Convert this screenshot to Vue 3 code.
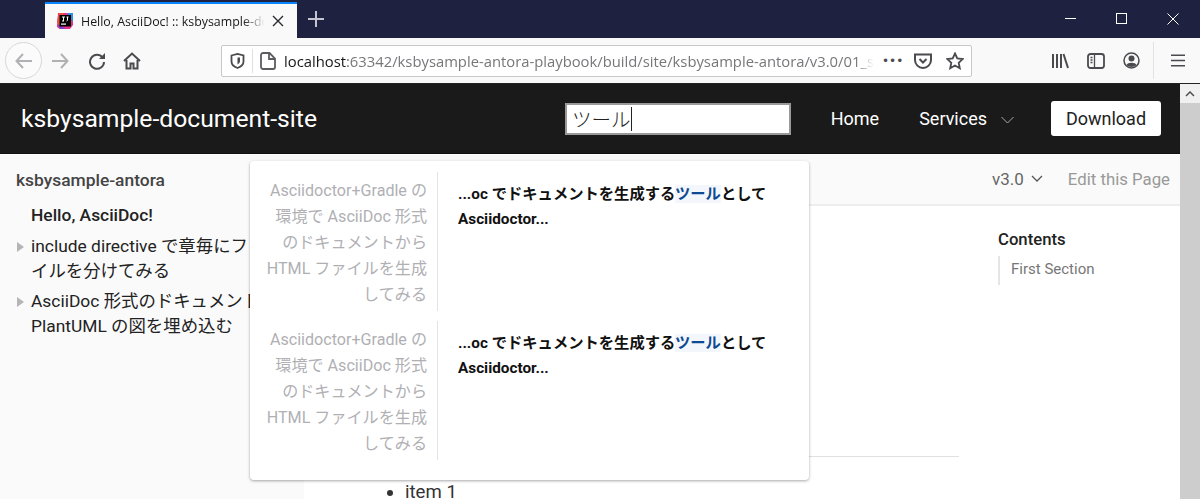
<script setup>
const results = [1, 2]
</script>

<template>
  <div class="page">
    <div class="titlebar">
      <div class="tab">
        <svg class="favicon" width="18" height="18" viewBox="0 0 18 18">
          <path d="M2 1h9l6 2v10l-3 4H4l-3-2z" fill="#e8308a" />
          <path d="M1 9l2-8h5L3 17z" fill="#f0503c" />
          <path d="M11 1h6v9z" fill="#2f8fe0" />
          <path d="M1 12l3 5h6z" fill="#7a3fd0" />
          <rect x="3.5" y="3" width="11.5" height="11.5" fill="#000" />
          <rect x="5" y="11.5" width="5" height="1.2" fill="#fff" />
          <path d="M6 5h3M7.5 5v4M6 9h2M10.5 5h2M11.5 5v3.4l-1 .6" stroke="#fff" stroke-width="1" fill="none" />
        </svg>
        <span class="tab-title">Hello, AsciiDoc! :: ksbysample-document-site</span>
        <svg class="tab-close" width="12" height="12" viewBox="0 0 12 12"><path d="M1 1l10 10M11 1L1 11" stroke="#2a2a2e" stroke-width="1.4" /></svg>
      </div>
      <svg class="newtab" width="16" height="16" viewBox="0 0 16 16"><path d="M8 0v16M0 8h16" stroke="#c4c5d0" stroke-width="2" /></svg>
      <div class="winbtns">
        <svg width="12" height="12" viewBox="0 0 12 12"><path d="M0 5.500h11" stroke="#fff" stroke-width="1" /></svg>
        <svg width="12" height="12" viewBox="0 0 12 12"><rect x=".5" y=".5" width="10" height="10" fill="none" stroke="#fff" stroke-width="1" /></svg>
        <svg width="12" height="12" viewBox="0 0 12 12"><path d="M.5.5l11 11M11.5.5l-11 11" stroke="#fff" stroke-width="1" /></svg>
      </div>
    </div>

    <div class="browserbar">
      <div class="back">
        <svg width="18" height="16" viewBox="0 0 18 16"><path d="M8 1L1.500 8 8 15M2 8h15" fill="none" stroke="#b1b1b3" stroke-width="2" /></svg>
      </div>
      <svg class="forward" width="18" height="16" viewBox="0 0 18 16"><path d="M10 1l6.500 7L10 15M16 8H1" fill="none" stroke="#b1b1b3" stroke-width="2" /></svg>
      <svg class="reload" width="18" height="18" viewBox="0 0 18 18"><path d="M14.500 5.500A7 7 0 1 0 16 10" fill="none" stroke="#4a4a4f" stroke-width="2" /><path d="M17 1v6h-6z" fill="#4a4a4f" /></svg>
      <svg class="home" width="18" height="18" viewBox="0 0 18 18"><path d="M1 9l8-7.500L17 9M3.500 8v8.500h4v-5h3v5h4V8" fill="none" stroke="#4a4a4f" stroke-width="2" /></svg>
      <div class="urlbar">
        <svg class="shield" width="15" height="16" viewBox="0 0 15 16"><path d="M1.500 2.500L7.500 1l6 1.500v6c0 3-3 5.500-6 6.500-3-1-6-3.500-6-6.500z" fill="none" stroke="#4a4a4f" stroke-width="1.800" /><path d="M7.500 4.500h2.500v3.500c0 1.500-1 2.500-2.500 3.500z" fill="#4a4a4f" /></svg>
        <span class="urlsep"></span>
        <svg class="pageicon" width="16" height="18" viewBox="0 0 16 18"><path d="M3 1h6.500L15 6.500V15a2 2 0 0 1-2 2H3a2 2 0 0 1-2-2V3a2 2 0 0 1 2-2zM9 1v6h6" fill="none" stroke="#5b5b60" stroke-width="1.800" /></svg>
        <span class="url"><span class="host">localhost</span>:63342/ksbysample-antora-playbook/build/site/ksbysample-antora/v3.0/01_section</span>
        <span class="dots">•••</span>
        <svg class="pocket" width="18" height="16" viewBox="0 0 18 16"><path d="M1 1.500h16V7a8 8 0 0 1-16 0z" fill="none" stroke="#4a4a4f" stroke-width="2" /><path d="M5.500 6L9 9.500 12.500 6" fill="none" stroke="#4a4a4f" stroke-width="2" /></svg>
        <svg class="star" width="18" height="18" viewBox="0 0 18 18"><path d="M9 1.500l2.300 5 5.400.6-4 3.700 1.100 5.400L9 13.500l-4.800 2.700 1.100-5.400-4-3.700 5.400-.6z" fill="none" stroke="#4a4a4f" stroke-width="1.800" /></svg>
      </div>
      <svg class="library" width="18" height="16" viewBox="0 0 18 16"><path d="M2 1v14M6 1v14M10 1v14M12.500 1l4.500 14" stroke="#4a4a4f" stroke-width="2" fill="none" /></svg>
      <svg class="sidebar-ic" width="18" height="16" viewBox="0 0 18 16"><rect x="1" y="1" width="16" height="14" rx="2.500" fill="none" stroke="#4a4a4f" stroke-width="1.800" /><path d="M7.500 1v14M3.500 4.500h2M3.500 7h2M3.500 9.500h2" stroke="#4a4a4f" stroke-width="1.300" /></svg>
      <svg class="account" width="17" height="17" viewBox="0 0 17 17"><circle cx="8.500" cy="8.500" r="7.500" fill="none" stroke="#4a4a4f" stroke-width="1.500" /><circle cx="8.500" cy="6.500" r="3" fill="#4a4a4f" /><path d="M3.500 13c1-3 9-3 10 0-2 2.500-8 2.500-10 0z" fill="#4a4a4f" /></svg>
      <span class="toolsep"></span>
      <svg class="menu" width="14" height="13" viewBox="0 0 14 13"><path d="M0 1.250h14M0 6.500h14M0 11.750h14" stroke="#4a4a4f" stroke-width="1.700" /></svg>
    </div>

    <div class="viewport">
      <div class="site">
        <header class="navbar">
          <span class="brand">ksbysample-document-site</span>
          <div class="search"><span class="query">ツール</span><i class="caret"></i></div>
          <nav class="links">
            <span class="link">Home</span>
            <span class="link services">Services
              <svg width="13" height="8" viewBox="0 0 13 8"><path d="M.5 1l6 6 6-6" fill="none" stroke="#aaa" stroke-width="1" /></svg>
            </span>
            <span class="download">Download</span>
          </nav>
        </header>
        <div class="body">
          <aside class="side">
            <div class="comp">ksbysample-antora</div>
            <div class="navitem current">Hello, AsciiDoc!</div>
            <div class="navitem arrow">include directive で章毎にファ<br />イルを分けてみる</div>
            <div class="navitem arrow">AsciiDoc 形式のドキュメントに<br />PlantUML の図を埋め込む</div>
          </aside>
          <main class="main">
            <div class="crumbs">
              <span class="version">v3.0
                <svg width="12" height="7" viewBox="0 0 12 7"><path d="M1 1l5 5 5-5" fill="none" stroke="#555" stroke-width="1.300" /></svg>
              </span>
              <span class="edit">Edit this Page</span>
            </div>
            <div class="columns">
              <article class="article">
                <hr class="rule" />
                <ul class="items"><li>item 1</li></ul>
              </article>
              <div class="toc">
                <div class="toc-title">Contents</div>
                <div class="toc-item">First Section</div>
              </div>
            </div>
          </main>
        </div>
      </div>
      <div class="scrollbar">
        <div class="scroll-up">
          <svg width="10" height="6" viewBox="0 0 10 6"><path d="M1 5l4-4 4 4" fill="none" stroke="#505050" stroke-width="1.500" /></svg>
        </div>
        <div class="thumb"></div>
      </div>

      <div class="popover">
        <div v-for="r in results" :key="r" class="result">
          <div class="hit-title">Asciidoctor+Gradle の環境で AsciiDoc 形式のドキュメントから HTML ファイルを生成してみる</div>
          <div class="hit-text">...oc でドキュメントを生成する<mark>ツール</mark>として Asciidoctor...</div>
        </div>
      </div>
    </div>
  </div>
</template>

<style>
html, body { margin: 0; overflow: hidden; background: #fff; }
</style>

<style scoped>
.page {
  width: 1200px;
  height: 499px;
  overflow: hidden;
  display: flex;
  flex-direction: column;
  font-family: Roboto, "Noto Sans CJK JP", sans-serif;
}
.titlebar {
  height: 38px;
  flex: none;
  background: #1f2141;
  display: flex;
  align-items: flex-end;
  padding-left: 45px;
}
.tab {
  width: 252px;
  height: 36px;
  box-sizing: border-box;
  border-top: 2px solid #0a84ff;
  background: #f9f9fa;
  display: flex;
  align-items: center;
  padding: 0 13px 0 11px;
  gap: 7px;
}
.favicon { flex: none; }
.tab-title {
  flex: 1;
  overflow: hidden;
  white-space: nowrap;
  font: 12.400px "Open Sans", sans-serif;
  color: #18181a;
  -webkit-mask-image: linear-gradient(90deg, #000 88%, transparent);
  mask-image: linear-gradient(90deg, #000 88%, transparent);
}
.tab-close { flex: none; }
.newtab { margin: 0 0 11px 11px; }
.winbtns {
  margin-left: auto;
  display: flex;
  gap: 39px;
  padding-right: 21px;
  margin-bottom: 13px;
}
.browserbar {
  height: 46px;
  flex: none;
  box-sizing: border-box;
  background: #f9f9fa;
  border-bottom: 1px solid #222;
  display: flex;
  align-items: center;
  padding: 0 0 0 5px;
}
.back {
  width: 35px;
  height: 35px;
  border: 1px solid #d8d8da;
  border-radius: 50%;
  display: flex;
  align-items: center;
  justify-content: center;
  background: #fbfbfb;
  flex: none;
}
.forward { margin-left: 9px; }
.reload { margin-left: 19px; }
.home { margin-left: 17px; }
.urlbar {
  width: 751px;
  height: 32px;
  margin-left: 80px;
  box-sizing: border-box;
  background: #fff;
  border: 1px solid #c8c8c9;
  border-radius: 2px;
  display: flex;
  align-items: center;
  padding-left: 8px;
  flex: none;
}
.shield { flex: none; }
.urlsep { width: 1px; height: 24px; background: #e0e0e2; margin: 0 7px; flex: none; }
.pageicon { flex: none; margin-right: 8px; }
.url {
  flex: 1;
  min-width: 0;
  overflow: hidden;
  white-space: nowrap;
  font: 14.800px "Open Sans", sans-serif;
  color: #77777a;
  -webkit-mask-image: linear-gradient(90deg, #000 97%, transparent);
  mask-image: linear-gradient(90deg, #000 97%, transparent);
}
.host { color: #18181a; }
.dots { flex: none; margin-left: 8px; color: #4a4a4f; font: 12px "DejaVu Sans", sans-serif; width: 19px; white-space: nowrap; }
.pocket { flex: none; margin-left: 13px; }
.star { flex: none; margin: 0 7px 0 14px; }
.library { margin-left: 79px; }
.sidebar-ic { margin-left: 18px; }
.account { margin-left: 18px; }
.toolsep { width: 1px; height: 37px; background: #e2e2e4; margin-left: 13px; }
.menu { margin-left: 17px; }
.viewport {
  position: relative;
  flex: 1;
  min-height: 0;
  display: flex;
  overflow: hidden;
}
.site { flex: 1; min-width: 0; display: flex; flex-direction: column; }
.navbar {
  height: 70px;
  flex: none;
  box-sizing: border-box;
  background: #1a1a1a;
  color: #fff;
  display: flex;
  align-items: center;
  padding: 0 19px 0 21px;
  border-bottom: 1px solid #111;
}
.brand { font-size: 24.700px; width: 544px; flex: none; white-space: nowrap; }
.search {
  width: 226px;
  height: 32px;
  flex: none;
  box-sizing: border-box;
  background: #fff;
  border: 2px solid #999;
  display: flex;
  align-items: center;
  padding-left: 5px;
  color: #222;
  font-size: 19.500px;
}
.query { font-family: "Noto Sans CJK JP", sans-serif; font-weight: 300; line-height: 1; }
.caret { width: 1px; height: 24px; background: #222; }
.links { margin-left: auto; display: flex; align-items: center; font-size: 18px; }
.link { white-space: nowrap; }
.services { margin-left: 40px; display: flex; align-items: center; gap: 14px; }
.services svg { margin-top: 2px; }
.download {
  margin-left: 37px;
  width: 110px;
  height: 35px;
  background: #fff;
  color: #222;
  border-radius: 3px;
  display: flex;
  align-items: center;
  justify-content: center;
}
.body { flex: 1; min-height: 0; display: flex; border-top: 1px solid #fff; }
.side {
  width: 304px;
  flex: none;
  box-sizing: border-box;
  background: #fafafa;
  padding: 15px 0 0 16px;
  font-size: 17.400px;
  color: #222;
  overflow: hidden;
}
.comp { font-weight: 500; color: #444; line-height: 20px; margin-bottom: 13px; }
.navitem { position: relative; margin-left: 15px; width: 260px; line-height: 25px; margin-bottom: 5px; }
.current { font-weight: 500; margin-bottom: 6px; }
.arrow::before {
  content: "";
  position: absolute;
  left: -14px;
  top: 8px;
  border-left: 7px solid #b5b5b5;
  border-top: 5px solid transparent;
  border-bottom: 5px solid transparent;
}
.main { flex: 1; min-width: 0; display: flex; flex-direction: column; }
.crumbs {
  height: 51px;
  flex: none;
  box-sizing: border-box;
  background: #fafafa;
  border-bottom: 2px solid #eee;
  display: flex;
  align-items: center;
  justify-content: flex-end;
  padding: 0 10px 2px 0;
  font-size: 17px;
}
.version { color: #666; display: flex; align-items: center; gap: 7px; }
.edit { color: #999; margin-left: 25px; font-size: 16.800px; }
.columns { flex: 1; display: flex; background: #fff; min-height: 0; }
.article { width: 655px; flex: none; padding-top: 250px; }
.rule { margin: 0; border: 0; border-top: 1px solid #e0e0e0; }
.items { margin: 25px 0 0; padding-left: 101px; font-size: 18.600px; color: #333; line-height: 20px; }
.toc { margin-left: 39px; padding-top: 24px; font-size: 16.700px; }
.toc-title { font-weight: 500; color: #222; line-height: 20px; }
.toc-item {
  margin-top: 6px;
  border-left: 2px solid #e5e5e5;
  padding-left: 11px;
  height: 29px;
  line-height: 27px;
  font-size: 15px;
  color: #777;
}
.scrollbar { width: 20px; flex: none; background: #f0f0f0; display: flex; flex-direction: column; }
.scroll-up { height: 19px; flex: none; display: flex; align-items: center; justify-content: center; }
.thumb { flex: 1; background: #cdcdcd; }
.popover {
  position: absolute;
  left: 250px;
  top: 77px;
  width: 559px;
  height: 319px;
  box-sizing: border-box;
  background: #fff;
  border-radius: 4px;
  box-shadow: 0 1px 3px rgba(0, 0, 0, .35);
  padding: 11px 0 0;
  display: flex;
  flex-direction: column;
  gap: 10px;
}
.result { display: flex; height: 139px; }
.hit-title {
  width: 188px;
  flex: none;
  box-sizing: border-box;
  padding: 6px 10px 0 13px;
  border-right: 1px solid #e4e4e4;
  color: #b0b0b4;
  font-size: 16.100px;
  line-height: 26px;
  text-align: right;
}
.hit-text {
  padding: 9.500px 30px 0 20px;
  font-size: 15.300px;
  font-weight: 700;
  line-height: 25px;
  color: #111;
}
mark { background: #f3f7fc; color: #0e4a94; }
</style>
